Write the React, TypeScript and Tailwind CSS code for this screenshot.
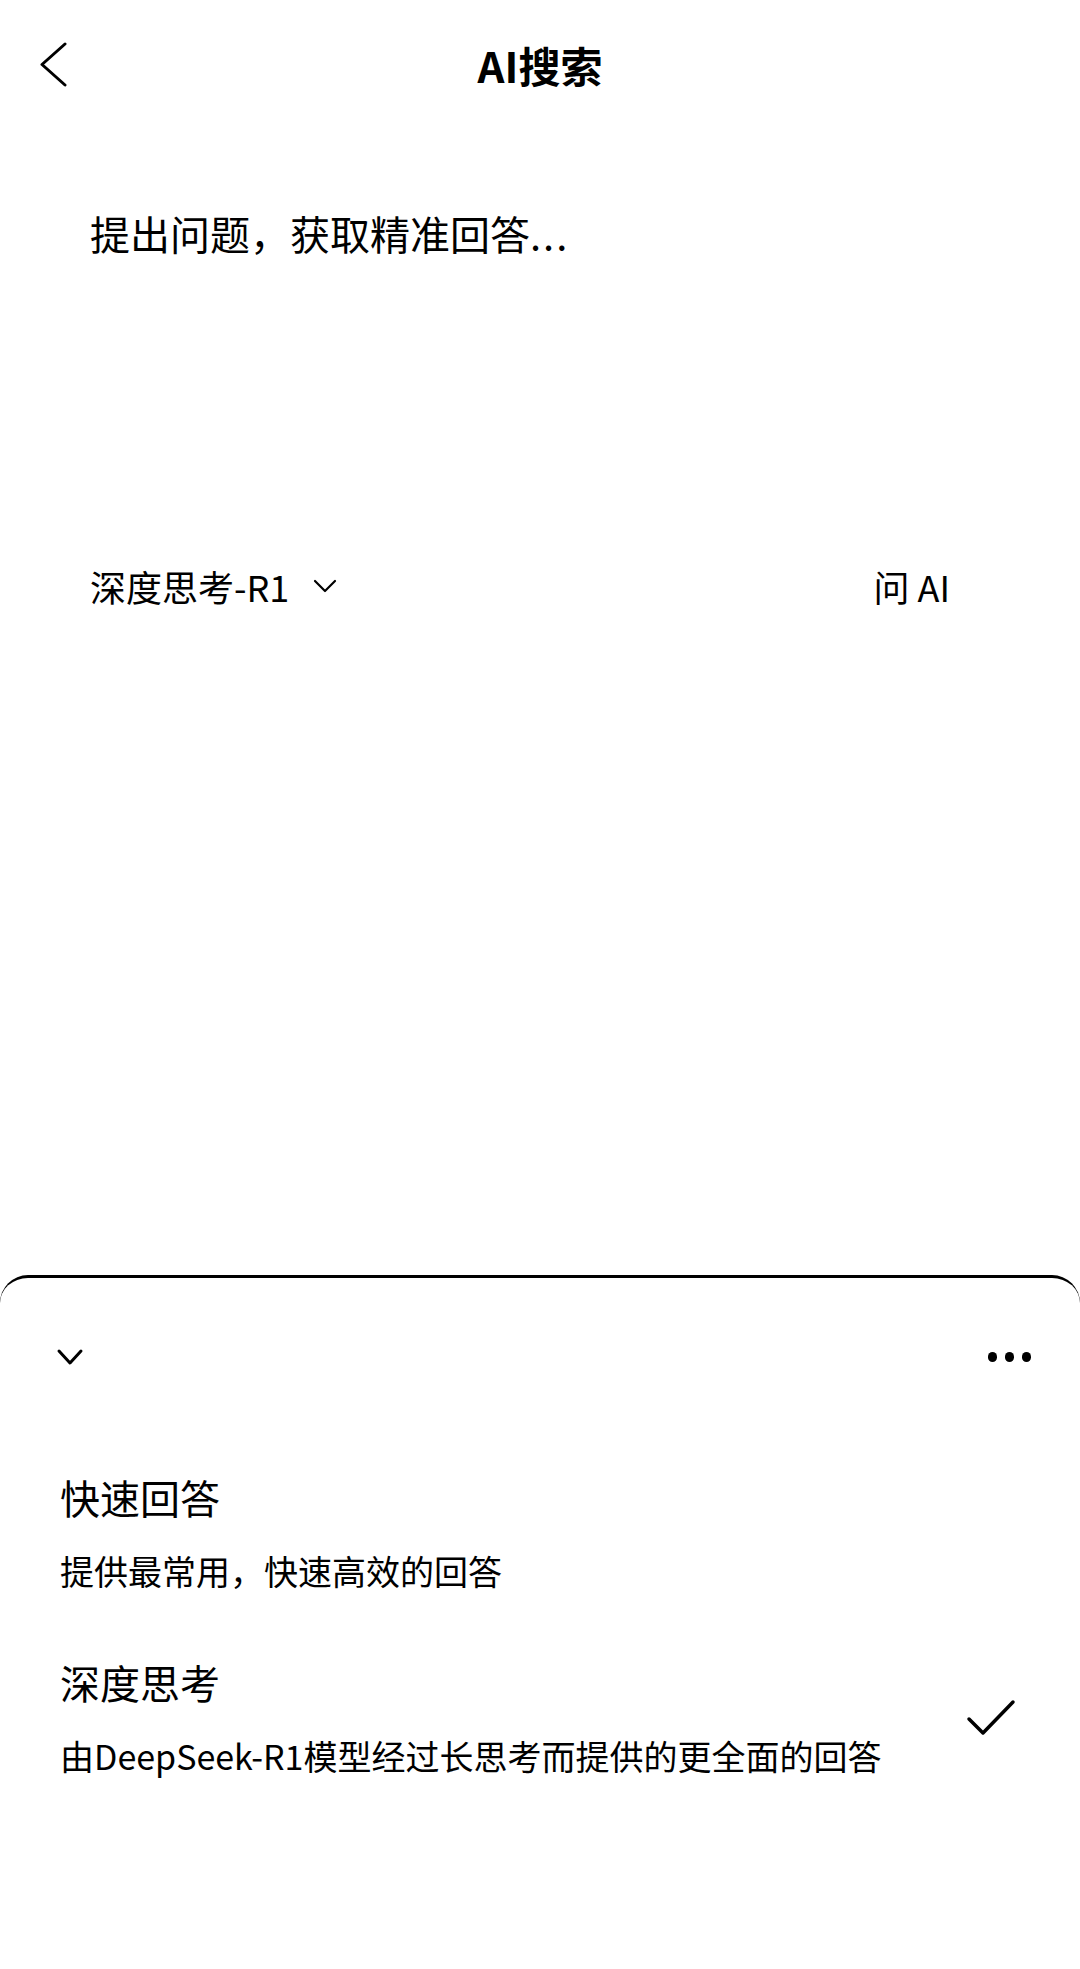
import { useState } from 'react';

const modes = [
  { key: 'fast', title: '快速回答', desc: '提供最常用，快速高效的回答' },
  { key: 'deep', title: '深度思考', desc: '由DeepSeek-R1模型经过长思考而提供的更全面的回答' },
];

const App = () => {
  const [mode, setMode] = useState('deep');

  return (
    <div className="w-[1080px] h-[1969px] bg-white text-black flex flex-col font-['Noto_Sans_CJK_SC','Noto_Sans',sans-serif]">
      {/* Header */}
      <header className="h-[130px] grid grid-cols-[1fr_auto_1fr] items-center">
        <button className="pl-[38px] flex items-center" aria-label="返回">
          <svg width="30" height="46" viewBox="0 0 30 46" fill="none" stroke="currentColor" strokeWidth="3" strokeLinecap="round" strokeLinejoin="round">
            <path d="M27 2 L4 22.5 L27 43" />
          </svg>
        </button>
        <h1 className="text-[42px] font-semibold leading-none">AI搜索</h1>
        <div />
      </header>

      {/* Input area */}
      <div className="pl-[90px] pr-[130px]">
        <div className="h-[438px] pt-[83px]">
          <p className="text-[40px] leading-none">
            提出问题，获取精准回答<span className="tracking-[2px]">...</span>
          </p>
        </div>
        <div className="flex items-center justify-between">
          <button className="flex items-center gap-[24px] text-[36px] leading-none">
            <span>深度思考-R1</span>
            <svg width="24" height="14" viewBox="0 0 24 14" fill="none" stroke="currentColor" strokeWidth="2.2" strokeLinecap="round" strokeLinejoin="round">
              <path d="M2 2 L12 12 L22 2" />
            </svg>
          </button>
          <button className="text-[36px] leading-none">问 AI</button>
        </div>
      </div>

      {/* Bottom sheet */}
      <div className="mt-auto h-[694px] border-t-[3px] border-black rounded-t-[28px] bg-white">
        <div className="pt-[59px] pl-[56px] pr-[49px] h-[99px] flex items-center justify-between">
          <svg width="28" height="18" viewBox="0 0 28 18" fill="none" stroke="currentColor" strokeWidth="3" strokeLinecap="round" strokeLinejoin="round">
            <path d="M3 3 L14 15 L25 3" />
          </svg>
          <div className="flex items-center gap-[8px]">
            <span className="w-[9px] h-[10px] rounded-full bg-black" />
            <span className="w-[9px] h-[10px] rounded-full bg-black" />
            <span className="w-[9px] h-[10px] rounded-full bg-black" />
          </div>
        </div>

        <div className="pt-[100px] flex flex-col gap-[74px]">
          {modes.map((m) => (
            <div
              key={m.key}
              onClick={() => setMode(m.key)}
              className="pl-[60px] pr-[64px] flex items-center justify-between cursor-pointer"
            >
              <div className="flex flex-col gap-[37px]">
                <span className="text-[40px] leading-none">{m.title}</span>
                <span className="text-[34px] leading-none">{m.desc}</span>
              </div>
              {mode === m.key && (
                <svg width="50" height="40" viewBox="0 0 50 40" fill="none" stroke="currentColor" strokeWidth="3.5" strokeLinecap="round" strokeLinejoin="round">
                  <path d="M3 21 L17 35 L47 4" />
                </svg>
              )}
            </div>
          ))}
        </div>
      </div>
    </div>
  );
};

export default App;
